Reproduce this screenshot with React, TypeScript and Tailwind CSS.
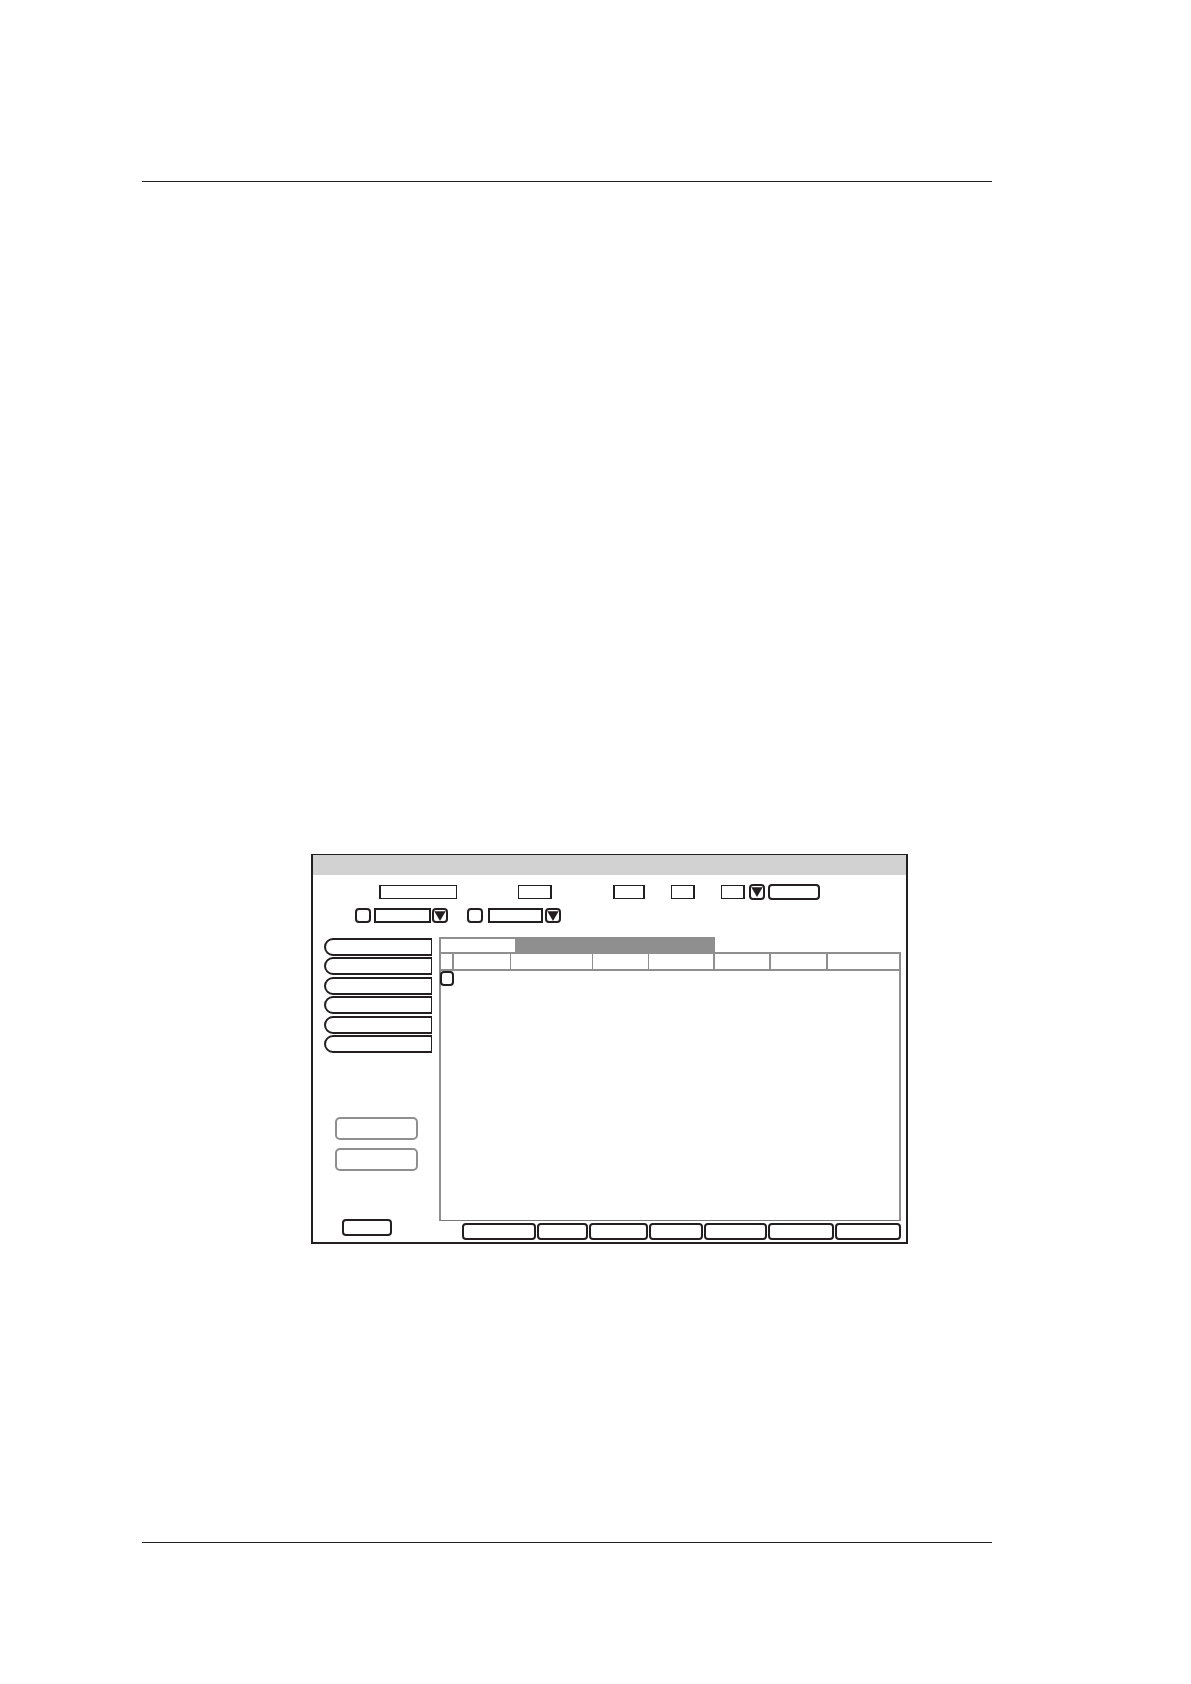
import { useState } from "react";

const sideTabs = ["Tab 1", "Tab 2", "Tab 3", "Tab 4", "Tab 5", "Tab 6"];

const columns = [
    { name: "Select", style: "w-[13px] border-r-2" },
    { name: "Column 1", style: "w-[57px] border-r" },
    { name: "Column 2", style: "w-[82px] border-r" },
    { name: "Column 3", style: "w-[56px] border-r" },
    { name: "Column 4", style: "w-[66px] border-r-2" },
    { name: "Column 5", style: "w-[56px] border-r-2" },
    { name: "Column 6", style: "w-[57px] border-r-2" },
    { name: "Column 7", style: "" },
];

const actions = [
    { name: "Action 1", width: "w-[74px]" },
    { name: "Action 2", width: "w-[51px]" },
    { name: "Action 3", width: "w-[59px]" },
    { name: "Action 4", width: "w-[54px]" },
    { name: "Action 5", width: "w-[63px]" },
    { name: "Action 6", width: "w-[66px]" },
    { name: "Action 7", width: "w-[66px]" },
];

const Field = ({ label, className }: { label: string; className: string }) => {
    const [value, setValue] = useState("");

    return (
        <input
            type="text"
            aria-label={label}
            value={value}
            onChange={(e) => setValue(e.target.value)}
            className={`shrink-0 px-1 text-[10px] bg-white border-[#231f20] outline-none ${className}`}
        />
    );
};

const Check = ({ label, className }: { label: string; className: string }) => (
    <input
        type="checkbox"
        aria-label={label}
        className={`block shrink-0 appearance-none h-[15px] border-2 border-[#231f20] rounded-[4px] bg-white checked:bg-[#231f20] ${className}`}
    />
);

const DropButton = ({ label, className }: { label: string; className: string }) => (
    <button
        type="button"
        aria-label={label}
        className={`flex shrink-0 items-center justify-center w-4 border-2 border-[#231f20] rounded-[4px] bg-white ${className}`}
    >
        <svg className="w-3 h-[10px] shrink-0" viewBox="0 0 12 10" aria-hidden="true">
            <path d="M0.3 0.3h11.4L6 10z" fill="#231f20" />
        </svg>
    </button>
);

export default function App() {
    const [tab, setTab] = useState(0);

    return (
        <div className="min-h-screen bg-white pt-[181px] pb-[141px] pl-[142px] pr-[199px] flex flex-col font-['Liberation_Sans',sans-serif]">
            <main className="flex-1 border-y border-[#231f20] pt-[672px] pl-[169px] pr-[84px]">
                <section className="flex flex-col border-2 border-t border-[#231f20]">
                    <header className="h-5 bg-[#d2d2d2]" />

                    <div className="pt-[9px] flex flex-col gap-2">
                        <div className="flex items-center h-4 pl-[66px]">
                            <Field label="Name" className="w-[78px] h-[14px] border border-l-2" />
                            <Field label="Number" className="w-[34px] h-[14px] ml-[61px] border border-r-2" />
                            <Field label="Day" className="w-8 h-[14px] ml-[61px] border border-x-2" />
                            <Field label="Month" className="w-6 h-[14px] ml-[26px] border border-r-2" />
                            <Field label="Year" className="w-6 h-[14px] ml-[26px] border border-r-2" />
                            <DropButton label="Pick date" className="h-4 ml-1" />
                            <button
                                type="button"
                                aria-label="Search"
                                className="shrink-0 w-[52px] h-4 ml-[3px] border-2 border-[#231f20] rounded-[4px]"
                            />
                        </div>
                        <div className="flex items-center h-[15px] pl-[42px]">
                            <Check label="Use first filter" className="w-4" />
                            <Field label="First filter" className="w-[57px] h-[15px] ml-[3px] border-2" />
                            <DropButton label="First filter options" className="h-[15px] ml-px" />
                            <Check label="Use second filter" className="w-4 ml-[19px]" />
                            <Field label="Second filter" className="w-[55px] h-[15px] ml-[5px] border-2" />
                            <DropButton label="Second filter options" className="h-[15px] ml-[2px]" />
                        </div>
                    </div>

                    <div className="flex pt-[14px]">
                        <aside className="w-[126px] shrink-0 pt-px pb-[6px] flex flex-col">
                            <nav className="flex flex-col justify-between h-[115px] pl-[11px]">
                                {sideTabs.map((name) => (
                                    <button
                                        key={name}
                                        type="button"
                                        aria-label={name}
                                        className="w-[108px] h-[18px] border-2 border-r border-[#231f20] rounded-l-full"
                                    />
                                ))}
                            </nav>
                            <div className="flex flex-col gap-2 mt-16 pl-[22px]">
                                <button type="button" aria-label="Previous" className="w-[83px] h-[23px] border-2 border-[#8f8f8f] rounded-[5px]" />
                                <button type="button" aria-label="Next" className="w-[83px] h-[23px] border-2 border-[#8f8f8f] rounded-[5px]" />
                            </div>
                            <button
                                type="button"
                                aria-label="Close"
                                className="w-[50px] h-[17px] mt-12 ml-[29px] border-2 border-[#231f20] rounded-[4px]"
                            />
                        </aside>

                        <div className="flex-1 min-w-0 pr-[5px] pb-[2px] flex flex-col">
                            <div className="flex h-[15px]">
                                <button
                                    type="button"
                                    aria-label="Current"
                                    onClick={() => setTab(0)}
                                    className={`w-[76px] border-t-2 border-l-2 border-[#8f8f8f] ${tab === 0 ? "bg-white" : "bg-[#8f8f8f]"}`}
                                />
                                <button
                                    type="button"
                                    aria-label="History"
                                    onClick={() => setTab(1)}
                                    className={`w-[200px] border-t-2 border-r-2 border-[#8f8f8f] ${tab === 1 ? "bg-white" : "bg-[#8f8f8f]"}`}
                                />
                            </div>
                            <div className="flex-1 border-2 border-b border-[#8f8f8f] border-b-[#777777]">
                                <table className="w-full table-fixed border-separate border-spacing-0">
                                    <thead>
                                        <tr>
                                            {columns.map((col) => (
                                                <th
                                                    key={col.name}
                                                    aria-label={col.name}
                                                    className={`h-[17px] p-0 border-b-2 border-[#8f8f8f] ${col.style}`}
                                                />
                                            ))}
                                        </tr>
                                    </thead>
                                    <tbody>
                                        <tr>
                                            <td className="p-0">
                                                <Check label="Select row" className="w-[14px] -ml-px" />
                                            </td>
                                            <td colSpan={7} className="p-0" />
                                        </tr>
                                    </tbody>
                                </table>
                            </div>
                            <div className="flex justify-end gap-px mt-[2px]">
                                {actions.map((action) => (
                                    <button
                                        key={action.name}
                                        type="button"
                                        aria-label={action.name}
                                        className={`h-[17px] shrink-0 border-2 border-[#231f20] rounded-[4px] ${action.width}`}
                                    />
                                ))}
                            </div>
                        </div>
                    </div>
                </section>
            </main>
        </div>
    );
}
